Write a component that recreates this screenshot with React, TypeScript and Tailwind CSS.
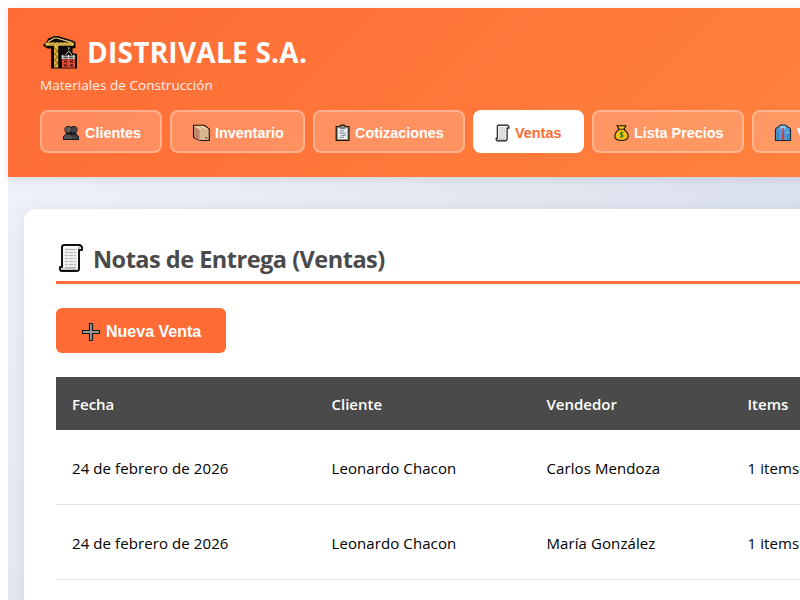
import type { ReactNode } from "react";

interface NavItem {
  label: string;
  icon: ReactNode;
  active?: boolean;
  width: string;
}

interface Sale {
  id: number;
  date: string;
  client: string;
  seller: string;
  items: string;
}

function CraneIcon() {
  return (
    <svg className="h-9 w-9 shrink-0" viewBox="0 0 36 36">
      <path d="M1.500 9.500L5 6l1-2.500L12.500 1H16l16 5 1.500 1.500v5.500l-3 .5V18l4.500 1v14.500H9v-20H5.500L1.500 11z" fill="#0b0805" />
      <path d="M12 9h4.200v23.500H12z" fill="#dfb13e" />
      <path d="M12.300 13l3.600 3-3.600 3 3.600 3-3.600 3 3.600 3-3.600 3" fill="none" stroke="#67500f" strokeWidth=".9" />
      <path d="M3.500 7.500h28.300v3.200H3.500z" fill="#f0c552" />
      <path d="M6 6.800L12.700 3h2L29.500 7.300" fill="none" stroke="#f1d58b" strokeWidth="1.200" />
      <path d="M7 10.300l2-2 2 2 2-2 2 2 2-2 2 2 2-2 2 2 2-2 2 2 2-2" fill="none" stroke="#8b671d" strokeWidth=".7" />
      <path d="M26.800 12v3m0 1l-3.200 4m3.200-4l3.200 4" fill="none" stroke="#d5d5d5" strokeWidth=".9" />
      <path d="M19.300 21.200h14M19.300 23.200h14M20.800 19.800v4M26.500 19.800v4M31.800 19.800v4" stroke="#eeeeee" strokeWidth="1" />
      <path d="M20 24.200h13v8.500H20z" fill="#df4937" />
      <path d="M22 25.500h3.200v2.200H22zM28 25.500h3.200v2.200H28zM22 29.300h3.200v2.200H22zM28 29.300h3.200v2.200H28z" fill="#6c1f19" />
    </svg>
  );
}

function PeopleIcon() {
  return (
    <svg className="h-[18px] w-[18px] shrink-0" viewBox="0 0 18 18">
      <path d="M1 16v-3.500L4 9.500 2.500 7V4L5 2h2.500L9 3l1.500-1H13l2.500 2v3L14 9.500l3 3V16z" fill="#171717" />
      <circle cx="12" cy="5.700" r="3" fill="#454545" />
      <circle cx="6" cy="5.700" r="3" fill="#555" />
      <path d="M9 15v-2.500q0-2 3-2t4 2.500v2z" fill="#3f4244" />
      <path d="M2 15v-2q0-2.500 4-2.500t4 2.500v2z" fill="#515557" />
      <path d="M5 4.300q1.500-1 2.500 0v2L6 7.500" fill="none" stroke="#777" strokeWidth=".7" />
    </svg>
  );
}

function BoxIcon() {
  return (
    <svg className="h-[18px] w-[18px] shrink-0" viewBox="0 0 18 18">
      <path d="M1.500 1.300H12L17.300 5v11.500H7.500l-6-3.200z" fill="#dbb58e" stroke="#17120d" strokeWidth="1.100" strokeLinejoin="round" />
      <path d="M2 2.200l5.500 3.300v11L2 13z" fill="#b98d6c" />
      <path d="M2.400 1.900h9.300l5 3.300-9.200.3z" fill="#efd1aa" />
      <path d="M6.500 2L12 5.300v2.500M7.500 5.700v10.800" fill="none" stroke="#c29b71" strokeWidth=".8" />
      <path d="M4 10.500l1.500 1v2l-1.500-1z" fill="#e75f63" />
      <path d="M13.300 13h2v1.600h-2z" fill="#765c45" />
    </svg>
  );
}

function ClipboardIcon() {
  return (
    <svg className="h-[18px] w-[15px] shrink-0" viewBox="1.500 0 15 18">
      <path d="M2.700 2.500h3.700l1-1.300h3.400l1 1.300h3.700v14H2.700z" fill="#a48b63" stroke="#151515" strokeWidth="1.200" />
      <path d="M4.400 4h9.400v11H4.400z" fill="#e9eef0" />
      <path d="M6.500 3h5.200v2.200H6.500z" fill="#798087" />
      <path d="M6 7h4.500M6 9.200h6.300M7.500 11.400h4.800M6 13.300h4.500" stroke="#71828c" strokeWidth=".9" />
    </svg>
  );
}

function ReceiptIcon({ className }: { className: string }) {
  return (
    <svg className={className} viewBox="0 0 26 30" preserveAspectRatio="none">
      <path
        d="M6.500 2H22l2 2v3h-3v19q0 2-2.500 2H4q-2 0-2-2v-2h2V4q0-2 2.500-2z"
        fill="#f7f8f9"
        stroke="#111"
        strokeWidth="2"
        strokeLinejoin="round"
      />
      <path d="M6 5h13v20H6z" fill="#eceeef" />
      <path d="M21 6V4.500q0-1 1-1.500M4 26h14" fill="none" stroke="#8e9193" strokeWidth="1" />
      <path d="M7 6.500h11M7 9.500h3m1 0h4m1 0h2M7 12.500h3m1 0h4m1 0h2M7 15.500h3m1 0h4m1 0h2M7 18.500h3m1 0h4m1 0h2M7 21.500h3m1 0h4m1 0h2M7 24.500h11" stroke="#b2b6b8" strokeWidth="1.100" />
    </svg>
  );
}

function MoneyBagIcon() {
  return (
    <svg className="h-[18px] w-[15px] shrink-0" viewBox="1.500 0 15 18">
      <path
        d="M4.500 1.500l2.500.5 2-.5 2 .5 2.500-.5-2 4Q15.700 8.500 15.700 12.500q-.5 4-6.700 4t-6.700-4Q2.300 8.500 6.500 5.500z"
        fill="#f5bf1b"
        stroke="#201807"
        strokeWidth="1.200"
        strokeLinejoin="round"
      />
      <path d="M6.200 5.300h5.600" stroke="#4d3411" strokeWidth="1.200" />
      <path d="M10.800 8.500H8.500q-1 1 0 2h1q2 1 0 2.500H7.200M9 7.500V14" fill="none" stroke="#36851d" strokeWidth="1.200" />
    </svg>
  );
}

function ShirtIcon() {
  return (
    <svg className="h-[18px] w-[18px] shrink-0" viewBox="0 0 18 18">
      <path d="M1.500 16.500V5.500Q2 3.500 5 2.500l1.500-1.300h5L13 2.500q3 1 3.500 3v11z" fill="#4f9bd9" stroke="#132b3c" strokeWidth="1.200" strokeLinejoin="round" />
      <path d="M5.700 2.800l2.300 3.400 1-2 1 2 2.300-3.400-1-1H6.700z" fill="#91c9ee" />
      <path d="M8 4h2l-.4 2.200L10.500 16h-3l.9-9.800z" fill="#c94040" />
      <path d="M4 8v8M14 9.500V16" stroke="#286da6" strokeWidth=".8" />
      <path d="M12 8.500h2.200" stroke="#d1e8f7" strokeWidth=".8" />
    </svg>
  );
}

function PlusIcon() {
  return (
    <svg className="h-5 w-5 shrink-0" viewBox="0 0 20 20">
      <path d="M8.500 1.500h3v7h7v3h-7v7h-3v-7h-7v-3h7z" fill="#9a9a9a" stroke="#191919" strokeWidth="1.200" />
    </svg>
  );
}

const navItems: NavItem[] = [
  { label: "Clientes", icon: <PeopleIcon />, width: "w-[122px]" },
  { label: "Inventario", icon: <BoxIcon />, width: "w-[135px]" },
  { label: "Cotizaciones", icon: <ClipboardIcon />, width: "w-[152px]" },
  { label: "Ventas", icon: <ReceiptIcon className="h-[18px] w-[15px] shrink-0" />, active: true, width: "w-[111px]" },
  { label: "Lista Precios", icon: <MoneyBagIcon />, width: "w-[152px]" },
  { label: "Vendedores", icon: <ShirtIcon />, width: "w-[148px]" },
];

const sales: Sale[] = [
  { id: 1, date: "24 de febrero de 2026", client: "Leonardo Chacon", seller: "Carlos Mendoza", items: "1 items" },
  { id: 2, date: "24 de febrero de 2026", client: "Leonardo Chacon", seller: "María González", items: "1 items" },
];

const columns = "grid grid-cols-[259.500px_215px_201px_1fr] items-center px-4";

export default function App() {
  return (
    <div className="h-screen overflow-hidden bg-white pt-2 pl-2 font-['Open_Sans',sans-serif]">
      <div className="h-[760px] w-[1264px] bg-linear-[135deg,#f2f5fb_0%,#c3cbdf_100%]">
        <header className="h-[169px] bg-linear-[135deg,#ff6b35_0%,#ff8c42_100%] px-8 pt-[25px] text-white shadow-[0_2px_10px_rgba(0,0,0,0.1)]">
          <h1 className="flex h-[38px] items-center text-[28px] font-bold">
            <span className="mt-0.5 ml-0.5">
              <CraneIcon />
            </span>
            <span className="ml-[9px] tracking-[0.25px] whitespace-nowrap">DISTRIVALE S.A.</span>
          </h1>
          <p className="mt-1 h-5 text-[13.500px] leading-5 tracking-[0.05px] opacity-90">Materiales de Construcción</p>
          <nav className="mt-[15px] flex gap-2 font-['Liberation_Sans',sans-serif]">
            {navItems.map((item) => (
              <button
                key={item.label}
                className={`flex h-[43px] shrink-0 items-center gap-[5px] rounded-lg border-2 pt-0.5 pl-5 text-[14.400px] font-bold whitespace-nowrap ${item.width} ${
                  item.active ? "border-white bg-white text-[#ff6b35]" : "border-white/30 bg-white/20 text-white"
                }`}
              >
                {item.icon}
                <span className="pt-[3px]">{item.label}</span>
              </button>
            ))}
          </nav>
        </header>

        <main className="px-4 pt-8">
          <section className="h-[520px] rounded-xl bg-white px-8 pt-[33px] shadow-[0_4px_20px_rgba(0,0,0,0.08)]">
            <h2 className="flex h-[42px] items-start border-b-[3px] border-[#ff6b35] text-[23.500px] leading-[34px] font-bold text-[#4a4a4a]">
              <ReceiptIcon className="mt-px ml-0.5 h-[30px] w-[26px] shrink-0" />
              <span className="ml-[9px] tracking-[-0.5px]">Notas de Entrega (Ventas)</span>
            </h2>
            <button className="mt-6 flex h-[45px] w-[170px] items-center gap-[5px] rounded-md bg-[#ff6b35] pt-0.5 pl-[25px] font-['Liberation_Sans',sans-serif] text-base font-bold text-white">
              <PlusIcon />
              <span>Nueva Venta</span>
            </button>

            <div className="mt-6">
              <div className={`${columns} h-[53px] bg-[#4a4a4a] pt-px text-[15px] font-semibold text-white`}>
                <span>Fecha</span>
                <span>Cliente</span>
                <span>Vendedor</span>
                <span>Items</span>
              </div>
              {sales.map((sale) => (
                <div
                  key={sale.id}
                  className={`${columns} h-[75px] border-b border-[#e0e0e0] pt-0.5 text-[15px] tracking-[0.09px] text-black`}
                >
                  <span>{sale.date}</span>
                  <span>{sale.client}</span>
                  <span>{sale.seller}</span>
                  <span>{sale.items}</span>
                </div>
              ))}
            </div>
          </section>
        </main>
      </div>
    </div>
  );
}
